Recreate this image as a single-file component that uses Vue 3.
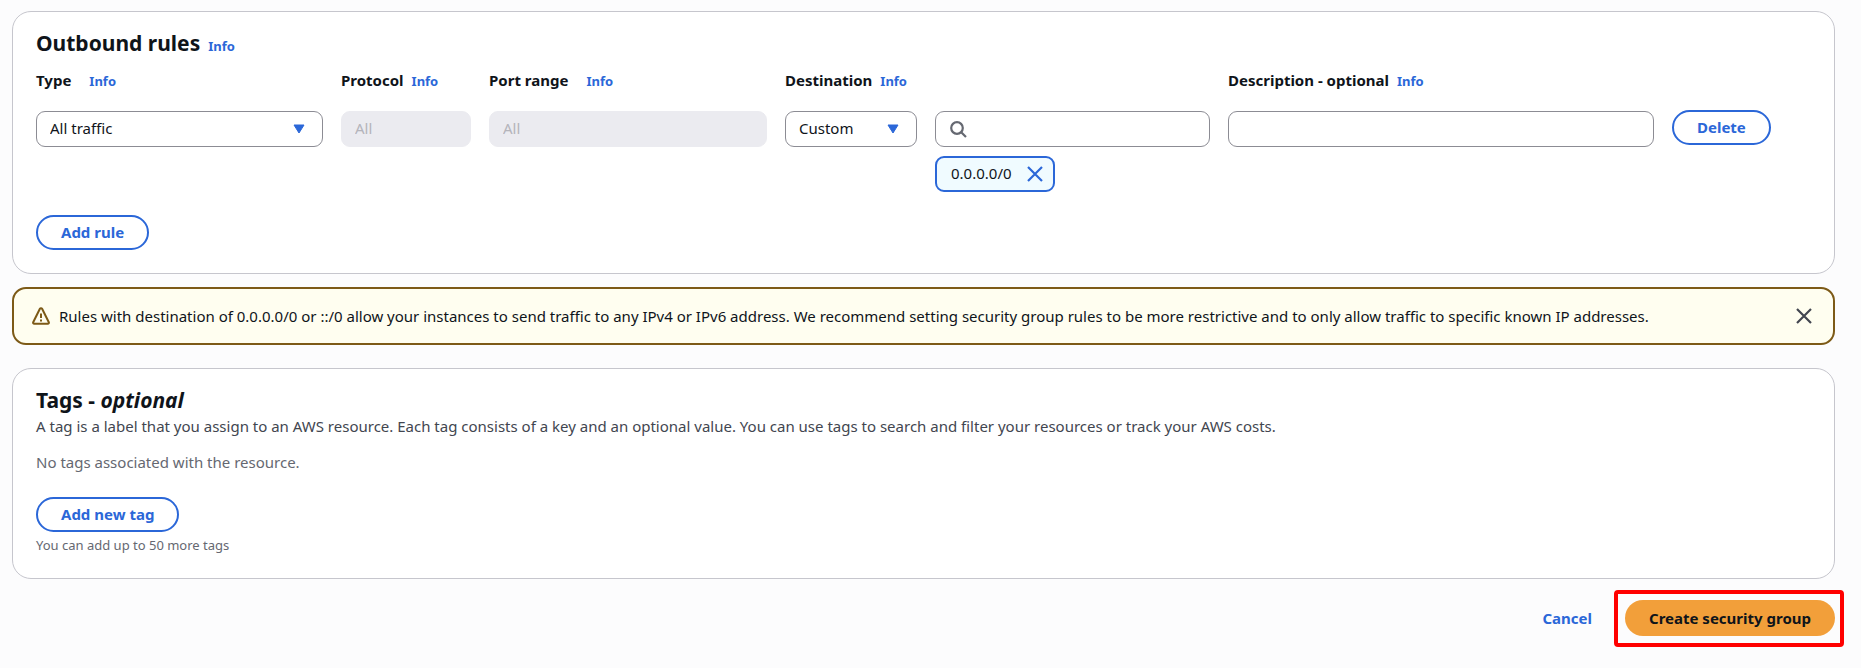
<script setup>
import { ref } from 'vue'

const type = ref('All traffic')
const destination = ref('Custom')
const search = ref('')
const description = ref('')
const tokens = ref(['0.0.0.0/0'])
const showAlert = ref(true)

function removeToken(token) {
  tokens.value = tokens.value.filter((t) => t !== token)
}
</script>

<template>
  <main class="page">
    <section class="card rules">
      <header class="card-head">
        <h2>Outbound rules</h2>
        <a href="#" class="info">Info</a>
      </header>

      <div class="grid">
        <div class="field">
          <div class="label wide"><label for="type">Type</label><a href="#" class="info">Info</a></div>
          <div class="select">
            <select id="type" v-model="type">
              <option>All traffic</option>
              <option>Custom TCP</option>
            </select>
            <svg class="caret" viewBox="0 0 12 10" aria-hidden="true"><path d="M1 1h10L6 9z" /></svg>
          </div>
        </div>

        <div class="field">
          <div class="label"><label for="protocol">Protocol</label><a href="#" class="info">Info</a></div>
          <input id="protocol" class="control" type="text" value="All" disabled />
        </div>

        <div class="field">
          <div class="label wide"><label for="port">Port range</label><a href="#" class="info">Info</a></div>
          <input id="port" class="control" type="text" value="All" disabled />
        </div>

        <div class="field">
          <div class="label"><label for="destination">Destination</label><a href="#" class="info">Info</a></div>
          <div class="destination">
            <div class="select">
              <select id="destination" v-model="destination">
                <option>Custom</option>
                <option>Anywhere</option>
              </select>
              <svg class="caret" viewBox="0 0 12 10" aria-hidden="true"><path d="M1 1h10L6 9z" /></svg>
            </div>
            <div class="lookup">
              <div class="search">
                <svg class="glass" viewBox="0 0 18 18" aria-hidden="true">
                  <circle cx="8" cy="8" r="5.8" /><path d="M12 12l5 5" />
                </svg>
                <input v-model="search" class="control" type="text" aria-label="Search destination" />
              </div>
              <div v-for="token in tokens" :key="token" class="token">
                <span>{{ token }}</span>
                <button type="button" class="icon-btn" :aria-label="`Remove ${token}`" @click="removeToken(token)">
                  <svg class="cross" viewBox="0 0 18 18" aria-hidden="true"><path d="M2 2l14 14M16 2L2 16" /></svg>
                </button>
              </div>
            </div>
          </div>
        </div>

        <div class="field">
          <div class="label"><label for="description">Description - optional</label><a href="#" class="info">Info</a></div>
          <input id="description" v-model="description" class="control" type="text" />
        </div>

        <div class="field last">
          <button type="button" class="btn">Delete</button>
        </div>
      </div>

      <button type="button" class="btn">Add rule</button>
    </section>

    <div v-if="showAlert" class="alert" role="alert">
      <svg class="warn" viewBox="0 0 18 18" aria-hidden="true">
        <path d="M7.9 1.800 1.200 15.200c-.3.700.1 1.600 1 1.600h13.600c.9 0 1.300-.9 1-1.600L10.100 1.800c-.4-.9-1.800-.9-2.200 0z" />
        <path d="M9 6.500v4.500M9 12.500v2" />
      </svg>
      <p>Rules with destination of 0.0.0.0/0 or ::/0 allow your instances to send traffic to any IPv4 or IPv6 address. We recommend setting security group rules to be more restrictive and to only allow traffic to specific known IP addresses.</p>
      <button type="button" class="icon-btn dismiss" aria-label="Dismiss" @click="showAlert = false">
        <svg class="cross" viewBox="0 0 18 18" aria-hidden="true"><path d="M2 2l14 14M16 2L2 16" /></svg>
      </button>
    </div>

    <section class="card tags">
      <h2>Tags - <em>optional</em></h2>
      <p class="about">A tag is a label that you assign to an AWS resource. Each tag consists of a key and an optional value. You can use tags to search and filter your resources or track your AWS costs.</p>
      <p class="empty">No tags associated with the resource.</p>
      <button type="button" class="btn">Add new tag</button>
      <p class="hint">You can add up to 50 more tags</p>
    </section>

    <footer class="actions">
      <button type="button" class="cancel">Cancel</button>
      <div class="marked">
        <button type="button" class="primary">Create security group</button>
      </div>
    </footer>
  </main>
</template>

<style>
body {
  background: #fcfcfd;
}
</style>

<style scoped>
.page {
  padding: 11px 26px 24px 12px;
  color: #0f141a;
  font-family: "Noto Sans", "Open Sans", sans-serif;
  font-size: 15px;
  line-height: 22px;
}
.page *,
.page *::after {
  box-sizing: border-box;
}
h2,
p {
  margin: 0;
}
h2 {
  font-size: 21px;
  font-weight: 700;
  line-height: 28px;
}
.card {
  padding: 17px 23px 23px;
  border: 1px solid #c6c6cd;
  border-radius: 19px;
  background: #fff;
}
.card-head {
  display: flex;
  align-items: baseline;
  gap: 8px;
}
.info {
  color: #2b67d8;
  font-size: 13px;
  font-weight: 700;
  text-decoration: none;
}
.grid {
  display: grid;
  grid-template-columns: 287fr 130fr 278fr 425fr 426fr 139fr;
  gap: 18px;
  margin: 12px 0 23px;
}
.field {
  min-width: 0;
}
.label {
  display: flex;
  align-items: baseline;
  gap: 8px;
  margin-bottom: 19px;
  font-weight: 700;
  white-space: nowrap;
}
.label.wide {
  gap: 18px;
}
.last {
  padding-top: 41px;
}
.control,
select {
  display: block;
  width: 100%;
  height: 36px;
  margin: 0;
  padding: 0 13px 2px;
  border: 1px solid #8c8c94;
  border-radius: 9px;
  background: #fff;
  color: inherit;
  font: inherit;
}
select {
  appearance: none;
}
.control:disabled {
  border-color: #ebebf0;
  background: #ebebf0;
  color: #b4b4bb;
}
.select,
.search {
  position: relative;
}
.caret {
  position: absolute;
  top: 13px;
  right: 18px;
  width: 12px;
  height: 10px;
  fill: #2b67d8;
  stroke: #2b67d8;
  stroke-linejoin: round;
  pointer-events: none;
}
.destination {
  display: grid;
  grid-template-columns: 132fr 275fr;
  gap: 18px;
}
.glass {
  position: absolute;
  top: 9px;
  left: 14px;
  width: 18px;
  height: 18px;
  fill: none;
  stroke: #656871;
  stroke-width: 2.2;
}
.search .control {
  padding-left: 40px;
}
.token {
  display: inline-flex;
  align-items: center;
  gap: 14px;
  height: 36px;
  margin-top: 9px;
  padding: 0 9px 0 14px;
  border: 2px solid #2b67d8;
  border-radius: 9px;
  background: #f0fbff;
  vertical-align: top;
}
.token span {
  padding-bottom: 3px;
}
.icon-btn {
  display: block;
  padding: 0;
  border: 0;
  background: none;
  color: #2b67d8;
  cursor: pointer;
}
.cross {
  display: block;
  width: 18px;
  height: 18px;
  fill: none;
  stroke: currentColor;
  stroke-width: 2.2;
}
.btn,
.primary,
.cancel {
  margin: 0;
  font: inherit;
  font-weight: 700;
  cursor: pointer;
}
.btn {
  display: block;
  height: 35px;
  padding: 0 23px 2px;
  border: 2px solid #2b67d8;
  border-radius: 18px;
  background: #fff;
  color: #2b67d8;
  white-space: nowrap;
}
.alert {
  display: flex;
  align-items: center;
  gap: 9px;
  margin: 13px 0 23px;
  padding: 16px 20px 16px 18px;
  border: 2px solid #7d5a17;
  border-radius: 14px;
  background: #fffef0;
}
.alert p {
  flex: 1;
}
.warn {
  flex: none;
  width: 18px;
  height: 18px;
  fill: none;
  stroke: #7d5a17;
  stroke-width: 2;
}
.dismiss {
  color: #424650;
}
.tags {
  padding-bottom: 22px;
}
.about {
  margin-top: 1px;
  color: #424650;
}
.empty {
  margin: 14px 0 24px;
  color: #656871;
}
.hint {
  margin-top: 2px;
  color: #656871;
  font-size: 13px;
}
.actions {
  display: flex;
  justify-content: flex-end;
  align-items: center;
  gap: 33px;
  margin-top: 21px;
}
.cancel {
  padding: 0 0 1px;
  border: 0;
  background: none;
  color: #2b67d8;
}
.marked {
  position: relative;
}
.marked::after {
  content: "";
  position: absolute;
  inset: -10px -9px -11px -11px;
  border: 4px solid #f00;
  border-radius: 4px;
  pointer-events: none;
}
.primary {
  display: block;
  height: 36px;
  padding: 0 24px 1px;
  border: 0;
  border-radius: 18px;
  background: #f29f3a;
  color: #0f141a;
}
</style>
